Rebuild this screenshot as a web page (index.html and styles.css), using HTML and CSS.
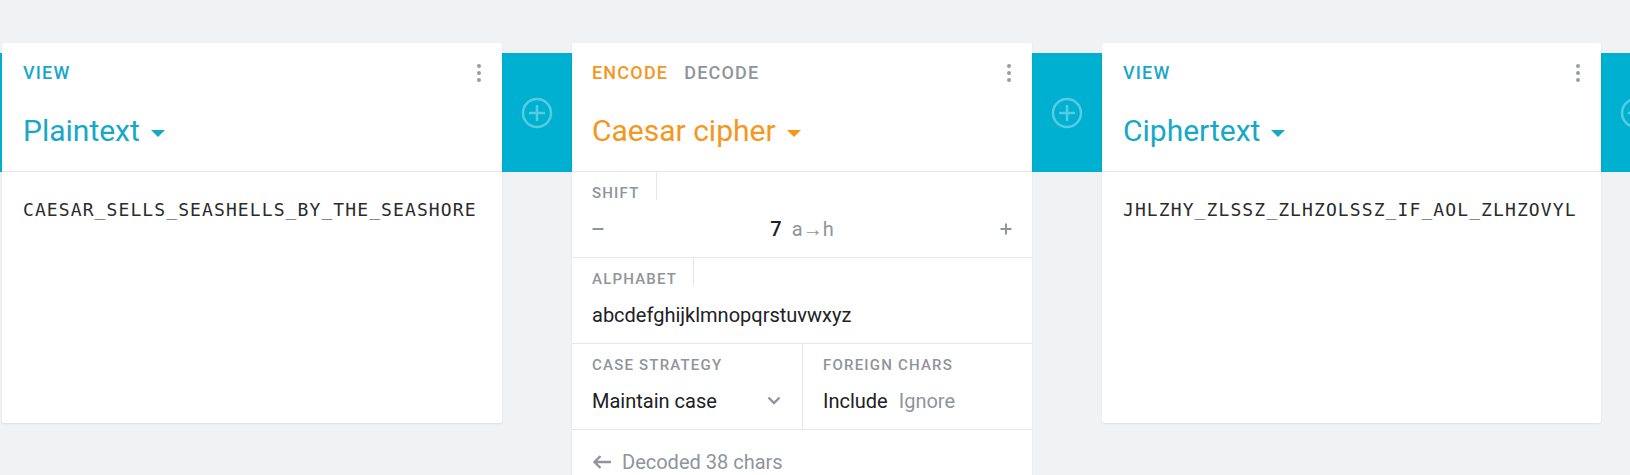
FILE: index.html
```html
<!DOCTYPE html>
<html lang="en">
<head>
<meta charset="utf-8">
<title>Cryptii pipe</title>
<link rel="stylesheet" href="styles.css">
</head>
<body>
<div class="pipe">
  <div class="band band-edge"></div>

  <section class="brick brick-view">
    <header class="brick-header">
      <div class="header-top">
        <div class="modes"><span class="mode mode-view">View</span></div>
        <span class="menu"><i></i><i></i><i></i></span>
      </div>
      <div class="title title-view">Plaintext<span class="caret"></span></div>
    </header>
    <div class="brick-body">
      <div class="mono">CAESAR_SELLS_SEASHELLS_BY_THE_SEASHORE</div>
    </div>
  </section>

  <div class="band">
    <svg class="add" width="32" height="32" viewBox="0 0 32 32"><circle cx="16" cy="16" r="14" fill="none" stroke="rgba(255,255,255,.35)" stroke-width="2.5"/><path d="M16 8v16M8 16h16" stroke="rgba(255,255,255,.35)" stroke-width="2.5" fill="none"/></svg>
  </div>

  <section class="brick brick-encoder">
    <header class="brick-header">
      <div class="header-top">
        <div class="modes"><span class="mode mode-active">Encode</span><span class="mode">Decode</span></div>
        <span class="menu"><i></i><i></i><i></i></span>
      </div>
      <div class="title title-encoder">Caesar cipher<span class="caret"></span></div>
    </header>

    <div class="field">
      <div class="field-label">Shift</div>
      <div class="field-value shift-row">
        <svg class="step" width="12" height="12" viewBox="0 0 12 12"><path d="M0.5 6h11" stroke="#8e959b" stroke-width="2"/></svg>
        <div class="shift-value"><span class="num">7</span><span class="hint">a<span class="arrow">→</span>h</span></div>
        <svg class="step" width="12" height="12" viewBox="0 0 12 12"><path d="M0.5 6h11M6 0.5v11" stroke="#8e959b" stroke-width="2"/></svg>
      </div>
    </div>

    <div class="field">
      <div class="field-label">Alphabet</div>
      <div class="field-value">abcdefghijklmnopqrstuvwxyz</div>
    </div>

    <div class="field-split">
      <div class="field field-half">
        <div class="field-label no-rule">Case strategy</div>
        <div class="field-value select-row">
          <span>Maintain case</span>
          <svg width="14" height="9" viewBox="0 0 14 9"><path d="M1.5 1.5L7 7l5.5-5.5" stroke="#8e959b" stroke-width="2.4" fill="none"/></svg>
        </div>
      </div>
      <div class="field field-half">
        <div class="field-label no-rule">Foreign chars</div>
        <div class="field-value toggle-row"><span class="on">Include</span><span class="off">Ignore</span></div>
      </div>
    </div>

    <div class="status">
      <svg width="20" height="16" viewBox="0 0 20 16"><path d="M19 8H2.5M8.5 2L2.5 8l6 6" stroke="#8e959b" stroke-width="2.4" fill="none"/></svg>
      <span>Decoded 38 chars</span>
    </div>
  </section>

  <div class="band">
    <svg class="add" width="32" height="32" viewBox="0 0 32 32"><circle cx="16" cy="16" r="14" fill="none" stroke="rgba(255,255,255,.35)" stroke-width="2.5"/><path d="M16 8v16M8 16h16" stroke="rgba(255,255,255,.35)" stroke-width="2.5" fill="none"/></svg>
  </div>

  <section class="brick brick-view brick-last">
    <header class="brick-header">
      <div class="header-top">
        <div class="modes"><span class="mode mode-view">View</span></div>
        <span class="menu"><i></i><i></i><i></i></span>
      </div>
      <div class="title title-view">Ciphertext<span class="caret"></span></div>
    </header>
    <div class="brick-body">
      <div class="mono">JHLZHY_ZLSSZ_ZLHZOLSSZ_IF_AOL_ZLHZOVYL</div>
    </div>
  </section>

  <div class="band">
    <svg class="add" width="32" height="32" viewBox="0 0 32 32"><circle cx="16" cy="16" r="14" fill="none" stroke="rgba(255,255,255,.35)" stroke-width="2.5"/><path d="M16 8v16M8 16h16" stroke="rgba(255,255,255,.35)" stroke-width="2.5" fill="none"/></svg>
  </div>
</div>
</body>
</html>
```

FILE: styles.css
```css
* { box-sizing: border-box; }

html, body {
  margin: 0;
  height: 100%;
}

body {
  background: #f1f2f4;
  font-family: Roboto, "Liberation Sans", Arial, sans-serif;
  color: #202124;
  overflow: hidden;
}

.pipe {
  display: flex;
  align-items: flex-start;
  padding-top: 43px;
  width: max-content;
}

.band {
  flex-shrink: 0;
  width: 70px;
  height: 119px;
  margin-top: 10px;
  background: #00b0d1;
  display: flex;
  align-items: center;
  justify-content: center;
}

.band-edge { width: 2px; }

.add { display: block; }

.brick {
  position: relative;
  z-index: 1;
  flex-shrink: 0;
  background: #fff;
  box-shadow: 0 1px 2px rgba(0, 0, 0, 0.08), 0 0 1px rgba(0, 0, 0, 0.06);
  border-radius: 2px;
}

.brick-view { width: 500px; height: 380px; }
.brick-last { width: 499px; }
.brick-encoder { width: 460px; }

.brick-header {
  height: 129px;
  padding: 18px 20px 0 21px;
  border-bottom: 1px solid #e4e6e8;
}

.brick-encoder .brick-header { padding-left: 20px; }

.header-top {
  display: flex;
  align-items: center;
  justify-content: space-between;
  height: 24px;
}

.modes { display: flex; gap: 16px; }

.mode {
  font-size: 18px;
  line-height: 24px;
  font-weight: 500;
  letter-spacing: 1.2px;
  text-transform: uppercase;
  color: #8e959b;
}

.mode-view { color: #17a8c8; }
.mode-active { color: #f5961d; }

.menu {
  display: flex;
  flex-direction: column;
  gap: 3px;
  width: 4px;
  margin-right: 1px;
}

.menu i {
  display: block;
  width: 4px;
  height: 4px;
  border-radius: 50%;
  background: #9a9da0;
}

.title {
  margin-top: 26px;
  font-size: 30px;
  line-height: 40px;
  font-weight: 400;
}

.title-view { color: #17a8c8; }
.title-encoder { color: #f5961d; }

.caret {
  display: inline-block;
  vertical-align: middle;
  margin-left: 11px;
  width: 0;
  height: 0;
  border-left: 7px solid transparent;
  border-right: 7px solid transparent;
  border-top: 7px solid currentColor;
}

.brick-body {
  padding: 24px 20px 0 21px;
}

.mono {
  font-family: "DejaVu Sans Mono", "Liberation Mono", monospace;
  font-size: 18px;
  line-height: 27px;
  letter-spacing: 1.1px;
  color: #2b2b2b;
}

.field {
  border-bottom: 1px solid #e4e6e8;
}

.field-label {
  display: block;
  width: max-content;
  height: 28px;
  padding: 14px 16px 0 20px;
  font-size: 15px;
  line-height: 15px;
  font-weight: 500;
  letter-spacing: 1.2px;
  text-transform: uppercase;
  color: #8e959b;
  border-right: 1px solid #e4e6e8;
}

.field-label.no-rule { border-right: 0; }

.field-value {
  display: flex;
  align-items: center;
  height: 57px;
  padding: 0 20px;
  font-size: 20px;
  line-height: 24px;
  color: #202124;
}

.shift-row { justify-content: space-between; }

.shift-value {
  display: flex;
  align-items: baseline;
  gap: 10px;
}

.num { font-weight: 500; }
.hint { color: #8e959b; }
.arrow { font-family: "Liberation Sans", "DejaVu Sans", sans-serif; }

.field-split {
  display: grid;
  grid-template-columns: 1fr 1fr;
  border-bottom: 1px solid #e4e6e8;
}

.field-half { border-bottom: 0; }
.field-half + .field-half { border-left: 1px solid #e4e6e8; }

.select-row { justify-content: space-between; }
.select-row svg { margin-right: 1px; }

.toggle-row { gap: 11px; }
.toggle-row .off { color: #8e959b; }

.status {
  display: flex;
  align-items: center;
  gap: 10px;
  padding: 20px 20px 20px;
  font-size: 20px;
  line-height: 24px;
  color: #8e959b;
}
```
